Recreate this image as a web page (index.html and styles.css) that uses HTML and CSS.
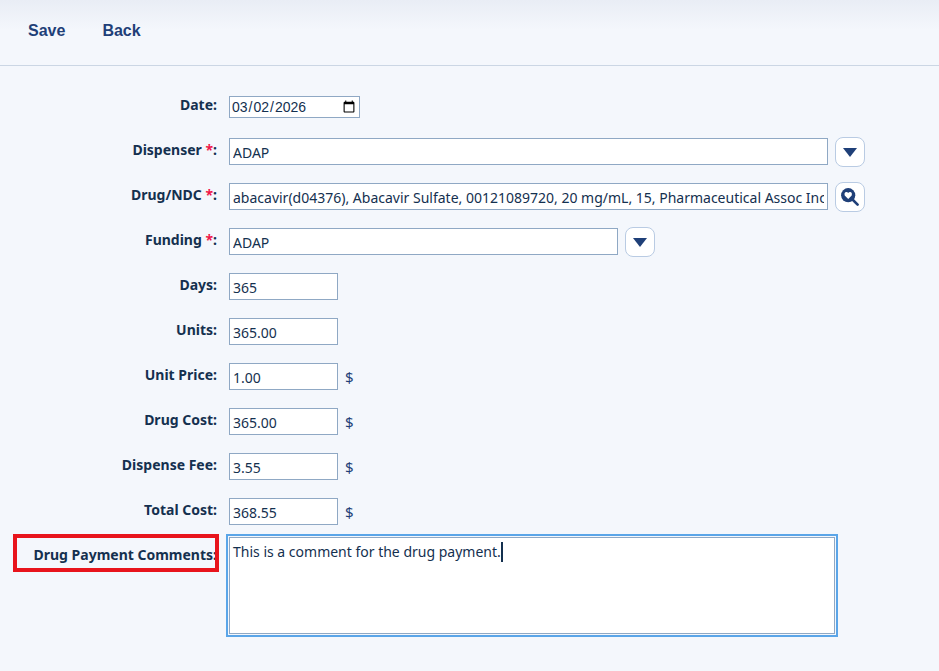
FILE: index.html
```html
<!DOCTYPE html>
<html lang="en">
<head>
  <meta charset="UTF-8" />
  <title>Drug Payment</title>
  <link rel="stylesheet" href="styles.css">
</head>
<body>

  <div class="toolbar">
    <a class="tool-link" href="#">Save</a>
    <a class="tool-link" href="#">Back</a>
  </div>

  <form class="payment-form">
    <div class="row row-date">
      <label class="field-label">Date:</label>
      <input class="date-input" type="date" value="2026-03-02">
    </div>

    <div class="row">
      <label class="field-label">Dispenser <span class="req">*</span>:</label>
      <input class="text-input wide" type="text" value="ADAP">
      <button class="icon-btn" type="button">
        <svg width="14" height="9" viewBox="0 0 14 9"><path d="M0 0h14L7 9z" fill="#1f3f78"/></svg>
      </button>
    </div>

    <div class="row">
      <label class="field-label">Drug/NDC <span class="req">*</span>:</label>
      <input class="text-input wide" type="text" value="abacavir(d04376), Abacavir Sulfate, 00121089720, 20 mg/mL, 15, Pharmaceutical Assoc Inc, Oral Solution">
      <button class="icon-btn" type="button">
        <svg width="18" height="18" viewBox="0 0 18 18">
          <circle cx="7.2" cy="7.2" r="7.1" fill="#1f3f78"/>
          <path d="M7.2 11L3.7 7.5Q2.9 4 5.4 3.9Q6.6 3.9 7.2 4.9Q7.8 3.9 9 3.9Q11.5 4 10.7 7.5Z" fill="white"/>
          <path d="M11 11L16.6 16.6" stroke="#1f3f78" stroke-width="2.6" stroke-linecap="round"/>
        </svg>
      </button>
    </div>

    <div class="row">
      <label class="field-label">Funding <span class="req">*</span>:</label>
      <input class="text-input medium" type="text" value="ADAP">
      <button class="icon-btn" type="button">
        <svg width="14" height="9" viewBox="0 0 14 9"><path d="M0 0h14L7 9z" fill="#1f3f78"/></svg>
      </button>
    </div>

    <div class="row">
      <label class="field-label">Days:</label>
      <input class="text-input short" type="text" value="365">
    </div>

    <div class="row">
      <label class="field-label">Units:</label>
      <input class="text-input short" type="text" value="365.00">
    </div>

    <div class="row">
      <label class="field-label">Unit Price:</label>
      <input class="text-input short" type="text" value="1.00">
      <span class="unit">$</span>
    </div>

    <div class="row">
      <label class="field-label">Drug Cost:</label>
      <input class="text-input short" type="text" value="365.00">
      <span class="unit">$</span>
    </div>

    <div class="row">
      <label class="field-label">Dispense Fee:</label>
      <input class="text-input short" type="text" value="3.55">
      <span class="unit">$</span>
    </div>

    <div class="row row-total">
      <label class="field-label">Total Cost:</label>
      <input class="text-input short" type="text" value="368.55">
      <span class="unit">$</span>
    </div>

    <div class="row row-comments">
      <label class="field-label comments-label">Drug Payment Comments:</label>
      <div class="comment-box">This is a comment for the drug payment.<span class="caret"></span></div>
    </div>
  </form>

</body>
</html>
```

FILE: styles.css
```css
:root {
  --navy: #1f3f78;
  --label: #14304f;
  --field-border: #8fa8c4;
  --bg: #f4f7fc;
}

* {
  box-sizing: border-box;
}

html {
  height: 100%;
}

body {
  min-height: 100%;
  margin: 0;
  background-color: var(--bg);
  font-family: 'Noto Sans', 'Open Sans', sans-serif;
  font-size: 14px;
  color: var(--label);
}

.toolbar {
  display: flex;
  align-items: center;
  gap: 37px;
  height: 66px;
  padding: 0 0 4px 28px;
  border-bottom: 1px solid #cbd6e4;
  background: linear-gradient(to bottom, #e9edf5, #f4f7fc 30px);
}

.tool-link {
  font-family: 'Liberation Sans', sans-serif;
  font-size: 16px;
  font-weight: bold;
  color: var(--navy);
  text-decoration: none;
}

.payment-form {
  padding-top: 30px;
}

.row {
  display: flex;
  align-items: flex-start;
  height: 27px;
  margin-bottom: 18px;
}

.row-date {
  height: 22px;
  margin-bottom: 20px;
}

.row-total {
  margin-bottom: 12px;
}

.field-label {
  flex: none;
  width: 217px;
  margin-right: 12px;
  padding-top: 2px;
  text-align: right;
  font-size: 14px;
  font-weight: bold;
  line-height: 20px;
}

.row-date .field-label {
  padding-top: 0;
  line-height: 18px;
}

.req {
  color: #f0184a;
}

.text-input {
  height: 27px;
  padding: 4px 3px 2px;
  border: 1px solid var(--field-border);
  border-radius: 0;
  background: white;
  font-family: inherit;
  font-size: 14px;
  color: var(--label);
}

.wide {
  width: 599px;
}

.medium {
  width: 389px;
}

.short {
  width: 109px;
}

.date-input {
  width: 131px;
  height: 22px;
  padding: 0 1px;
  border: 1px solid var(--field-border);
  background: white;
  font-family: 'Liberation Sans', sans-serif;
  font-size: 14px;
  color: var(--label);
}

.icon-btn {
  display: flex;
  flex: none;
  align-items: center;
  justify-content: center;
  width: 30px;
  height: 30px;
  margin: -1px 0 0 7px;
  padding: 0;
  border: 1px solid #b9cbe3;
  border-radius: 8px;
  background: white;
}

.unit {
  margin-left: 7px;
  font-size: 15px;
  line-height: 28px;
  color: var(--navy);
}

.row-comments {
  position: relative;
  height: auto;
}

.comments-label {
  padding-top: 8px;
}

/* red annotation drawn on top of the screenshot */
.comments-label::after {
  content: "";
  box-sizing: border-box;
  position: absolute;
  left: 13px;
  top: -3px;
  width: 206px;
  height: 38px;
  border: 4px solid #e8141c;
}

.comment-box {
  flex: none;
  width: 606px;
  height: 97px;
  padding: 4px 3px;
  border: 1px solid var(--field-border);
  outline: 2px solid #5aa5e8;
  outline-offset: 1px;
  background: white;
  line-height: 20px;
}

.caret {
  display: inline-block;
  width: 2px;
  height: 20px;
  vertical-align: top;
  background: var(--label);
}
```
